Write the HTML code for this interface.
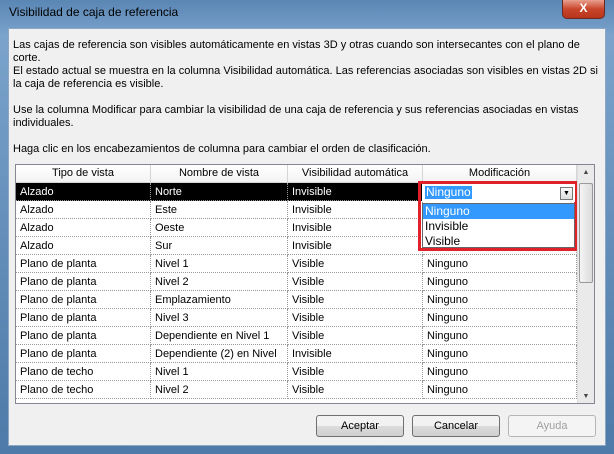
<!DOCTYPE html>
<html><head><style>
*{margin:0;padding:0;box-sizing:border-box}
body{width:614px;height:454px;overflow:hidden;font-family:"Liberation Sans",sans-serif;font-size:11px;color:#000;
background:linear-gradient(180deg,#5a86b4 0%,#7ba3cc 8%,#6f98c2 30%,#4d7aa8 100%);position:relative}
.title{position:absolute;left:9px;top:5px;font-size:12px;color:#000}
.close{position:absolute;left:562px;top:0;width:43px;height:19px;border:1px solid #6b2a20;border-top:none;border-radius:0 0 5px 5px;
background:linear-gradient(#e8a08e,#c9462c 50%,#b8341c);color:#fff;font-weight:bold;font-size:12px;text-align:center;line-height:17px}
.client{position:absolute;left:8px;top:28px;width:598px;height:418px;background:#f0f0f0;border:1px solid #8ca7c4}
.txt{position:absolute;left:13px;top:39px;width:585px;line-height:13px;color:#000}
.tbl{position:absolute;left:15px;top:164px;width:580px;height:240px;background:#fff;border:1px solid #828790;overflow:hidden}
.hdr{position:absolute;top:0;height:18px;border-right:1px solid #d5d5d5;border-bottom:1px solid #d5d5d5;text-align:center;line-height:17px;background:linear-gradient(#fff,#f3f3f3)}
.row{position:absolute;left:0;width:561px;height:18px}
.c{position:absolute;top:0;height:18px;line-height:19px;padding-left:4px;border-right:1px dotted #999;border-bottom:1px dotted #999;white-space:nowrap;overflow:hidden}
.sel .c{background:#000;color:#fff}
.sb{position:absolute;left:561px;top:0;width:17px;height:238px;background:#eaeaea;border-left:1px solid #ddd}
.thumb{position:absolute;left:1px;top:18px;width:14px;height:100px;background:linear-gradient(90deg,#f4f4f4,#dcdcdc);border:1px solid #999;border-radius:2px}
.red{position:absolute;left:418px;top:181px;width:159px;height:70px;border:3px solid #e0202a}
.combo{position:absolute;left:422px;top:184px;width:153px;height:18px;background:#fff}
.combo span{position:absolute;left:3px;top:2px;background:#3399ff;color:#fff;padding:0 1px;line-height:13px;font-size:12px}
.arr{position:absolute;right:2px;top:3px;width:13px;height:13px;border:1px solid #777;background:linear-gradient(#fafafa,#ddd);font-size:7px;text-align:center;line-height:12px}
.list{position:absolute;left:422px;top:203px;width:153px;height:45px;background:#fff;border:1px solid #666;font-size:12px}
.list div{height:15px;line-height:14px;padding-left:2px}
.btn{position:absolute;top:415px;width:88px;height:22px;border:1px solid #707070;border-radius:3px;background:linear-gradient(#f2f2f2 50%,#dcdcdc 50%,#cfcfcf);text-align:center;line-height:20px}
</style></head><body>
<div class="title">Visibilidad de caja de referencia</div>
<div class="close">X</div>
<div class="client"></div>
<div class="txt">Las cajas de referencia son visibles automáticamente en vistas 3D y otras cuando son intersecantes con el plano de corte.<br>El estado actual se muestra en la columna Visibilidad automática. Las referencias asociadas son visibles en vistas 2D si la caja de referencia es visible.<br><br>Use la columna Modificar para cambiar la visibilidad de una caja de referencia y sus referencias asociadas en vistas individuales.<br><br>Haga clic en los encabezamientos de columna para cambiar el orden de clasificación.</div>
<div class="tbl">
<div class="hdr" style="left:0;width:135px">Tipo de vista</div>
<div class="hdr" style="left:135px;width:137px">Nombre de vista</div>
<div class="hdr" style="left:272px;width:135px">Visibilidad automática</div>
<div class="hdr" style="left:407px;width:154px">Modificación</div>
<div class="row sel" style="top:18px"><div class="c" style="left:0;width:135px">Alzado</div><div class="c" style="left:135px;width:137px">Norte</div><div class="c" style="left:272px;width:135px">Invisible</div></div>
<div class="row" style="top:36px"><div class="c" style="left:0;width:135px">Alzado</div><div class="c" style="left:135px;width:137px">Este</div><div class="c" style="left:272px;width:135px">Invisible</div><div class="c" style="left:407px;width:154px"></div></div>
<div class="row" style="top:54px"><div class="c" style="left:0;width:135px">Alzado</div><div class="c" style="left:135px;width:137px">Oeste</div><div class="c" style="left:272px;width:135px">Invisible</div><div class="c" style="left:407px;width:154px"></div></div>
<div class="row" style="top:72px"><div class="c" style="left:0;width:135px">Alzado</div><div class="c" style="left:135px;width:137px">Sur</div><div class="c" style="left:272px;width:135px">Invisible</div><div class="c" style="left:407px;width:154px"></div></div>
<div class="row" style="top:90px"><div class="c" style="left:0;width:135px">Plano de planta</div><div class="c" style="left:135px;width:137px">Nivel 1</div><div class="c" style="left:272px;width:135px">Visible</div><div class="c" style="left:407px;width:154px">Ninguno</div></div>
<div class="row" style="top:108px"><div class="c" style="left:0;width:135px">Plano de planta</div><div class="c" style="left:135px;width:137px">Nivel 2</div><div class="c" style="left:272px;width:135px">Visible</div><div class="c" style="left:407px;width:154px">Ninguno</div></div>
<div class="row" style="top:126px"><div class="c" style="left:0;width:135px">Plano de planta</div><div class="c" style="left:135px;width:137px">Emplazamiento</div><div class="c" style="left:272px;width:135px">Visible</div><div class="c" style="left:407px;width:154px">Ninguno</div></div>
<div class="row" style="top:144px"><div class="c" style="left:0;width:135px">Plano de planta</div><div class="c" style="left:135px;width:137px">Nivel 3</div><div class="c" style="left:272px;width:135px">Visible</div><div class="c" style="left:407px;width:154px">Ninguno</div></div>
<div class="row" style="top:162px"><div class="c" style="left:0;width:135px">Plano de planta</div><div class="c" style="left:135px;width:137px">Dependiente en Nivel 1</div><div class="c" style="left:272px;width:135px">Visible</div><div class="c" style="left:407px;width:154px">Ninguno</div></div>
<div class="row" style="top:180px"><div class="c" style="left:0;width:135px">Plano de planta</div><div class="c" style="left:135px;width:137px">Dependiente (2) en Nivel</div><div class="c" style="left:272px;width:135px">Invisible</div><div class="c" style="left:407px;width:154px">Ninguno</div></div>
<div class="row" style="top:198px"><div class="c" style="left:0;width:135px">Plano de techo</div><div class="c" style="left:135px;width:137px">Nivel 1</div><div class="c" style="left:272px;width:135px">Visible</div><div class="c" style="left:407px;width:154px">Ninguno</div></div>
<div class="row" style="top:216px"><div class="c" style="left:0;width:135px">Plano de techo</div><div class="c" style="left:135px;width:137px">Nivel 2</div><div class="c" style="left:272px;width:135px">Visible</div><div class="c" style="left:407px;width:154px">Ninguno</div></div>
<div class="sb"><div style="text-align:center;font-size:7px;color:#444;margin-top:4px">▲</div><div class="thumb"></div><div style="position:absolute;bottom:3px;width:16px;text-align:center;font-size:7px;color:#444">▼</div></div>
</div>
<div class="red"></div>
<div class="combo"><span>Ninguno</span><div class="arr">▼</div></div>
<div class="list"><div style="background:#3399ff;color:#fff">Ninguno</div><div>Invisible</div><div>Visible</div></div>
<div class="btn" style="left:316px">Aceptar</div>
<div class="btn" style="left:412px">Cancelar</div>
<div class="btn" style="left:508px;color:#a0a0a0;border-color:#b5b5b5;background:#f4f4f4">Ayuda</div>
</body></html>
